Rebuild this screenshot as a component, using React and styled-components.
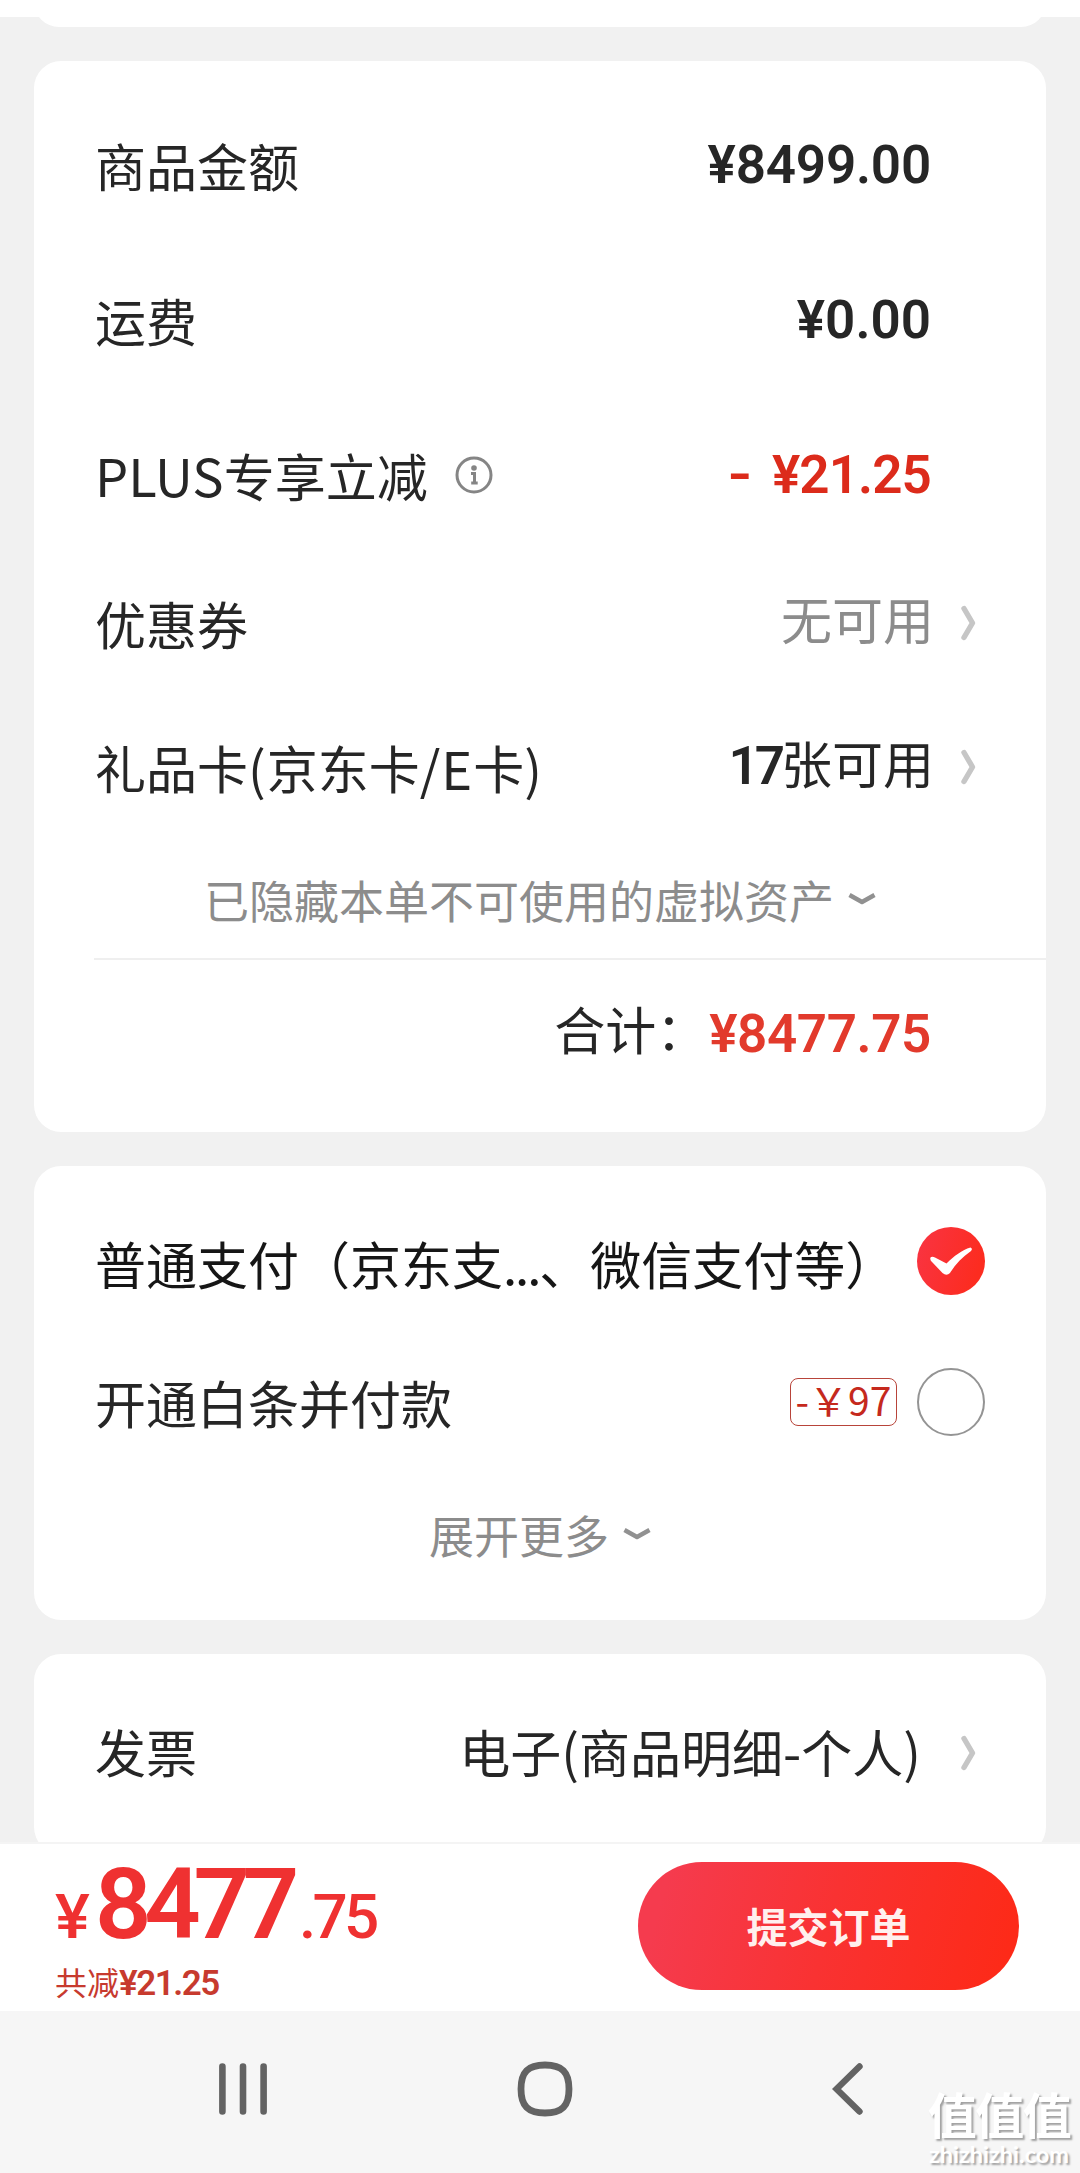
import styled, { createGlobalStyle, css } from "styled-components";

const Colors = {
  text: "#262626",
  gray: "#8c8c8c",
  arrow: "#c6c6c6",
  red: "#dc2b1b",
  page: "#f1f1f1",
};

const cjk = `"Noto Sans CJK SC", "Noto Sans", sans-serif`;
const digits = `Roboto, "Noto Sans CJK SC", sans-serif`;

const App = () => {
  return (
    <Page>
      <GlobalStyle />
      <StatusGap />
      <Content>
        <PreviousCard />
        <Card $height={1071} $top={26}>
          <Row $height={155}>
            <Label>商品金额</Label>
            <Price $spacing={-0.2}>¥8499.00</Price>
          </Row>
          <Row $height={155}>
            <Label>运费</Label>
            <Price $spacing={0}>¥0.00</Price>
          </Row>
          <Row $height={155}>
            <Label>
              <Latin>PLUS</Latin>专享立减
              <InfoIcon />
            </Label>
            <Price $color={Colors.red} $spacing={-0.9}>
              <Minus>-</Minus>¥21.25
            </Price>
          </Row>
          <Row $height={142} $arrow>
            <Label>优惠券</Label>
            <Value $color={Colors.gray}>无可用</Value>
            <ArrowRight />
          </Row>
          <Row $height={146} $arrow>
            <Label>
              礼品卡<Latin $wide>(</Latin>京东卡<Latin $wide>/E</Latin>卡
              <Latin>)</Latin>
            </Label>
            <Value>
              <Count>17</Count>张可用
            </Value>
            <ArrowRight />
          </Row>
          <MoreRow $height={118}>
            已隐藏本单不可使用的虚拟资产
            <ArrowDown />
          </MoreRow>
          <Divider />
          <TotalRow>
            <Label>合计：</Label>
            <TotalPrice $color="#e23a2c">¥8477.75</TotalPrice>
          </TotalRow>
        </Card>
        <Card $height={454} $top={26}>
          <PayRow>
            <PayLabel $dark>
              普通支付（京东支<Dots>...</Dots>、微信支付等）
            </PayLabel>
            <CheckedIcon />
          </PayRow>
          <PayRow>
            <Label>开通白条并付款</Label>
            <Discount>-￥97</Discount>
            <Radio />
          </PayRow>
          <MoreRow $height={124}>
            展开更多
            <ArrowDown />
          </MoreRow>
        </Card>
        <Card $height={200} $top={0}>
          <InvoiceRow $height={197} $arrow>
            <Label>发票</Label>
            <Invoice>
              电子<Latin>(</Latin>商品明细<Latin>-</Latin>个人<Latin>)</Latin>
            </Invoice>
            <ArrowRight />
          </InvoiceRow>
        </Card>
      </Content>
      <SubmitBar>
        <div>
          <Sum>
            <small>¥</small>
            <b>8477</b>
            <Cents>.75</Cents>
          </Sum>
          <Saved>
            共减<b>¥21.25</b>
          </Saved>
        </div>
        <SubmitButton>提交订单</SubmitButton>
      </SubmitBar>
      <NavBar>
        <svg width="48" height="52" viewBox="0 0 48 52">
          <path
            d="M3.4 3.5v45M24 3.5v45M44.6 3.5v45"
            stroke="#636363"
            strokeWidth="6.6"
            strokeLinecap="round"
          />
        </svg>
        <svg width="56" height="56" viewBox="0 0 56 56">
          <path
            d="M28 4C45 4 52 11 52 28S45 52 28 52S4 45 4 28S11 4 28 4Z"
            fill="none"
            stroke="#636363"
            strokeWidth="6.8"
          />
        </svg>
        <svg width="31" height="52" viewBox="0 0 31 52">
          <path
            d="M27.5 3.5L4.500 26L27.5 48.5"
            fill="none"
            stroke="#636363"
            strokeWidth="6.4"
            strokeLinecap="round"
          />
        </svg>
      </NavBar>
      <Watermark>
        <strong>值值值</strong>
        <span>zhizhizhi.com</span>
      </Watermark>
    </Page>
  );
};

const InfoIcon = () => (
  <Info width="38" height="38" viewBox="0 0 38 38">
    <circle cx="19" cy="19" r="17" fill="none" stroke="#858585" strokeWidth="3" />
    <circle cx="19" cy="12" r="2.8" fill="#858585" />
    <path
      d="M16 17.5h3.5v9.5M16.2 27h6.5"
      fill="none"
      stroke="#858585"
      strokeWidth="3"
    />
  </Info>
);

const ArrowRight = () => (
  <svg width="15" height="36" viewBox="0 0 15 36">
    <path
      d="M3 3.5L11.5 18L3 32.5"
      fill="none"
      stroke={Colors.arrow}
      strokeWidth="5.4"
      strokeLinecap="round"
      strokeLinejoin="round"
    />
  </svg>
);

const ArrowDown = () => (
  <svg width="28" height="14" viewBox="0 0 28 14">
    <path
      d="M1.5 3L14 10L26.5 3"
      fill="none"
      stroke="#919191"
      strokeWidth="4.4"
      strokeLinejoin="round"
    />
  </svg>
);

const CheckedIcon = () => (
  <Checked width="68" height="68" viewBox="0 0 68 68">
    <defs>
      <linearGradient id="checked" x1="0" y1="0" x2="1" y2="0.3">
        <stop offset="0" stopColor="#f93443" />
        <stop offset="1" stopColor="#fc2c20" />
      </linearGradient>
    </defs>
    <circle cx="34" cy="34" r="34" fill="url(#checked)" />
    <path
      d="M13.5 30.5Q12.5 33 15.5 35.5L25.500 46Q29.5 49.500 33 46C38 37.500 45 30.500 54 24Q56 21.500 53.5 20.500C45 23 37 29 29.5 36.500L18 30.500Q15 29 13.5 30.5Z"
      fill="#fff"
    />
  </Checked>
);

const GlobalStyle = createGlobalStyle`
  body {
    margin: 0;
    background: #fff;
  }
  * {
    box-sizing: border-box;
  }
`;

const Page = styled.div`
  position: relative;
  width: 1080px;
  height: 2173px;
  overflow: hidden;
  color: ${Colors.text};
  font-family: ${cjk};
`;

const StatusGap = styled.div`
  height: 17px;
  background: #fff;
`;

const Content = styled.div`
  display: flex;
  flex-direction: column;
  gap: 34px;
  height: 1825px;
  padding: 0 34px;
  overflow: hidden;
  background: ${Colors.page};
`;

const PreviousCard = styled.div`
  flex: none;
  height: 50px;
  margin-top: -40px;
  border-radius: 27px;
  background: #fff;
`;

const Card = styled.section`
  flex: none;
  height: ${(props) => props.$height}px;
  padding-top: ${(props) => props.$top}px;
  border-radius: 27px;
  background: #fff;
`;

const rowBase = css`
  display: flex;
  align-items: center;
  white-space: nowrap;
`;

const Row = styled.div`
  ${rowBase}
  height: ${(props) => props.$height}px;
  padding: 0 ${(props) => (props.$arrow ? 70 : 115)}px 0 61px;
`;

const Label = styled.span`
  display: flex;
  align-items: center;
  margin-right: auto;
  color: ${(props) => (props.$dark ? "#161616" : Colors.text)};
  font-size: 51px;
  line-height: 74px;
`;

const PayLabel = styled(Label)`
  padding-top: 2px;
`;

const Latin = styled.span`
  font-size: 52.5px;
  letter-spacing: ${(props) => (props.$wide ? 1 : 0)}px;
  line-height: 1;
`;

const Info = styled.svg`
  margin-left: 27px;
`;

const Price = styled.span`
  color: ${(props) => props.$color || Colors.text};
  font-family: ${digits};
  font-size: 53px;
  font-weight: 600;
  letter-spacing: ${(props) => props.$spacing ?? -0.4}px;
  line-height: 62px;
`;

const Minus = styled.span`
  display: inline-block;
  margin-right: 23px;
  transform: scaleX(1.25);
`;

const Value = styled.span`
  margin-right: 27px;
  padding-bottom: 11px;
  color: ${(props) => props.$color || Colors.text};
  font-size: 51px;
  line-height: 74px;
`;

const InvoiceRow = styled(Row)`
  ${Label} {
    padding-bottom: 4px;
  }
`;

const Invoice = styled(Value)`
  margin-right: 40px;
  padding-bottom: 4px;
`;

const Count = styled.b`
  font-family: ${digits};
  font-size: 53px;
  font-weight: 600;
  letter-spacing: -4px;
  line-height: 1;
`;

const MoreRow = styled.div`
  ${rowBase}
  justify-content: center;
  gap: 14px;
  height: ${(props) => props.$height}px;
  color: ${Colors.gray};
  font-size: 45px;
`;

const Divider = styled.div`
  height: 2px;
  margin-left: 60px;
  background: #efefef;
`;

const TotalRow = styled.div`
  ${rowBase}
  justify-content: flex-end;
  height: 135px;
  padding-right: 115px;

  ${Label} {
    margin-right: 2px;
  }
`;

const TotalPrice = styled(Price)`
  padding-top: 12px;
`;

const PayRow = styled.div`
  ${rowBase}
  height: 140px;
  padding: 0 61px;
`;

const Checked = styled.svg`
  margin-bottom: 2px;
`;

const Dots = styled.span`
  letter-spacing: -2.1px;
`;

const Discount = styled.span`
  height: 48px;
  width: 107px;
  margin-right: 20px;
  border: 1.5px solid #b8443a;
  border-radius: 8px;
  color: #c5291d;
  font-size: 39px;
  line-height: 41px;
  text-align: center;
`;

const Radio = styled.span`
  width: 68px;
  height: 68px;
  border: 2.5px solid #949494;
  border-radius: 50%;
`;

const SubmitBar = styled.footer`
  display: flex;
  justify-content: space-between;
  height: 169px;
  padding: 17px 61px 0 55px;
  border-top: 2px solid #f4f4f4;
  background: #fff;
`;

const Sum = styled.div`
  display: flex;
  align-items: baseline;
  height: 102px;
  color: #ef3131;
  font-family: ${digits};
  line-height: 86px;

  small {
    display: inline-block;
    font-size: 62px;
    font-weight: 500;
    transform: scaleX(1.06);
    transform-origin: left;
  }

  b {
    margin-left: 7px;
    font-size: 99px;
    font-weight: 600;
    letter-spacing: -7.3px;
  }
`;

const Cents = styled.span`
  margin-left: 7px;
  font-size: 62px;
  font-weight: 500;
  letter-spacing: -3.7px;
`;

const Saved = styled.div`
  color: #c73a2e;
  font-size: 32px;
  line-height: 36px;

  b {
    font-family: ${digits};
    font-size: 35px;
    font-weight: 600;
    letter-spacing: -1.5px;
    line-height: 1;
  }
`;

const SubmitButton = styled.button`
  width: 381px;
  height: 128px;
  margin-top: 1px;
  padding: 0 0 3px;
  border: 0;
  border-radius: 64px;
  background: linear-gradient(105deg, #f53b4e 8%, #f93232 50%, #fd2a18 95%);
  color: #fff0ee;
  font-family: ${cjk};
  font-size: 41px;
  font-weight: 700;
`;

const NavBar = styled.nav`
  display: flex;
  align-items: center;
  height: 162px;
  padding: 0 0 7px 219px;
  background: #f6f6f6;

  svg:nth-child(2) {
    margin: 0 259px 0 250px;
  }
`;

// logo stamp laid over the corner of the screen
const Watermark = styled.div`
  position: absolute;
  right: 8px;
  bottom: 6px;
  display: flex;
  flex-direction: column;
  align-items: center;
  width: 146px;
  color: #fff;
  text-shadow: 2px 2px 2px rgba(0, 0, 0, 0.35);

  strong {
    font-family: "Liberation Sans", "Noto Sans CJK SC", sans-serif;
    font-size: 49px;
    font-weight: 700;
    letter-spacing: -1.5px;
    line-height: 50px;
  }

  span {
    font-family: Lato, sans-serif;
    font-size: 23.5px;
    font-weight: 700;
    line-height: 25px;
  }
`;

export default App;
